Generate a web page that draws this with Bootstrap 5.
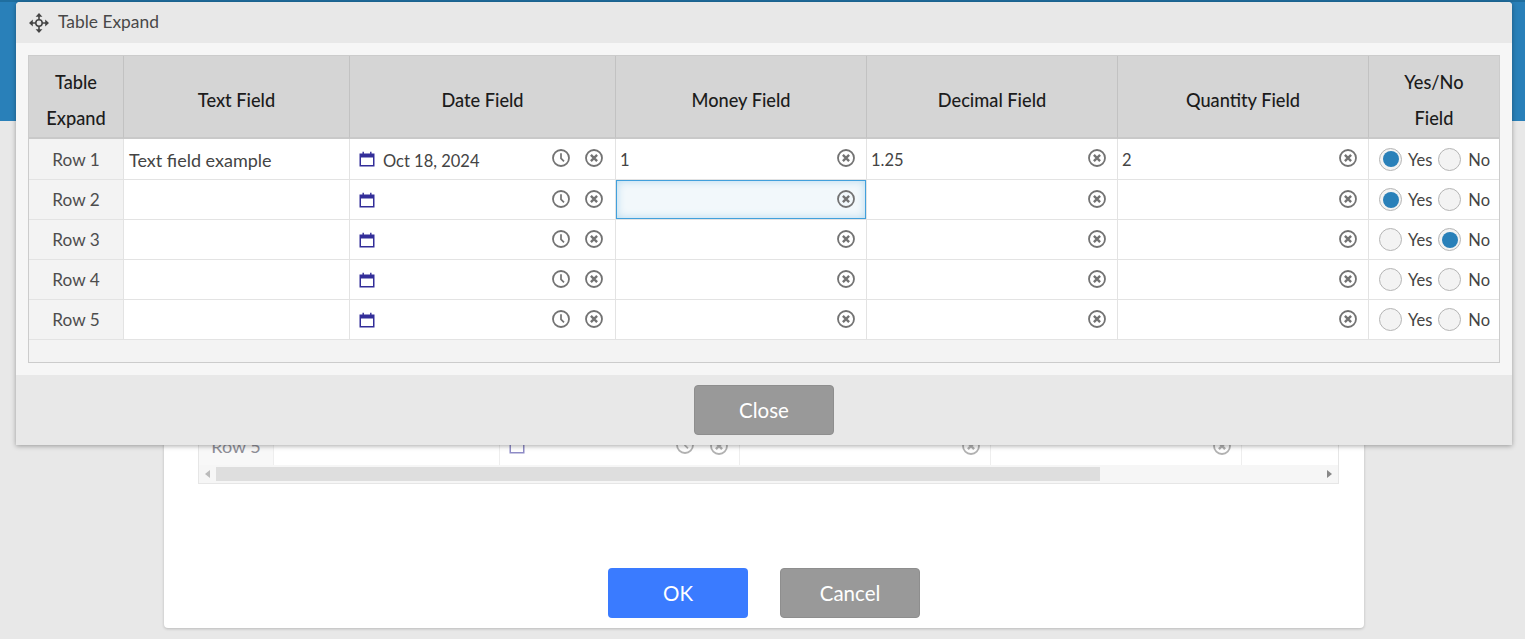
<!DOCTYPE html>
<html lang="en">
<head>
<meta charset="utf-8">
<title>Table Expand</title>
<link href="https://cdn.jsdelivr.net/npm/bootstrap@5.3.0/dist/css/bootstrap.min.css" rel="stylesheet">
<style>
html,body{height:639px;overflow:hidden}
body{background:#e8e8e8;font-family:"Lato","Liberation Sans",sans-serif;font-size:16px;color:#444;position:relative}
.topband{height:121px;background:#2980b9;border-top:2px solid #1f6e9f}
.dlg{width:1200px;height:507px;background:#fff;margin-left:164px;box-shadow:0 1px 3px rgba(0,0,0,.2);border-radius:0 0 4px 4px;padding:0 25px 0 34px}
.backbox{height:363px;width:1141px;border:1px solid #e6e6e6;border-top:0;display:flex;flex-direction:column;justify-content:flex-end}
.backrow{height:44px;display:flex;color:#8d8d96;background:#fff}
.backrow>div{border-right:1px solid #eee;display:flex;align-items:center}
.backlabel{background:#f8f8f8;justify-content:center;padding-top:6px;font-size:18px}
.bc1{width:75px}.bc2{width:226px}.bc3{width:240px;padding:6px 11px 0 9px}.bc4{width:251px;padding:6px 10px 0 0;justify-content:flex-end}.bc5{width:251px;padding:6px 10px 0 0;justify-content:flex-end}
.bc3 .grow{flex:1}
.backrow svg{opacity:.55}
.backrow .clock{margin-right:16px}
.backscroll{height:18px;background:#f6f6f6;position:relative;display:flex;align-items:center;justify-content:space-between;padding:0 6px}
.backthumb{position:absolute;left:17px;top:2px;height:14px;width:884px;background:#dedede}
.arrl{width:0;height:0;border:4px solid transparent;border-right:5px solid #bbb;border-left:0}
.arrr{width:0;height:0;border:4px solid transparent;border-left:5px solid #888;border-right:0}
.backbtns{margin-top:84px;padding-left:410px;gap:32px}
.bbtn{width:140px;height:50px;font-size:20.5px;border-radius:4px;color:#fff;padding:0;line-height:50px}
.bbtn-ok{background:#3a7bff;border:0}
.bbtn-gray{background:#999;border:1px solid #8e8e8e;line-height:48px}
.bbtn-gray:hover{background:#999;color:#fff}
.bbtn-ok:hover{background:#3a7bff;color:#fff}
.overlay{position:absolute;left:16px;top:2px;width:1496px;height:443px;background:#f6f6f6;box-shadow:0 1px 5px rgba(0,0,0,.35);border-radius:4px 4px 0 0;display:flex;flex-direction:column}
.ovhead{height:41px;background:#e8e8e8;padding:0 0 0 13px;gap:9px;font-size:17.4px;color:#484848;border-radius:4px 4px 0 0}
.ovbody{flex:1;padding:12px}
.ovfoot{height:70px;background:#e8e8e8;padding-top:10px}
.gridbox{height:308px;border:1px solid #ccc;background:#f3f3f3;width:1472px}
.gt{table-layout:fixed;border-collapse:separate;border-spacing:0;width:1470px;margin:0}
.gt th{background:#d5d5d5;color:#1c1c1c;font-weight:500;font-size:18.2px;line-height:36px;text-align:center;vertical-align:middle;padding:6px 0 0;height:83px;border-right:1px solid #c2c2c2;border-bottom:2px solid #c9c9c9}
.gt th:last-child{border-right:0}
.gt td{background:#fff;height:40px;padding:0;border-right:1px solid #e3e3e3;border-bottom:1px solid #e3e3e3;font-size:16.5px;color:#444;vertical-align:middle}
.gt tr:first-child td{height:41px}
.gt tr:first-child td.rowlab{padding-top:2px}
.gt td:last-child{border-right:0}
.gt td.rowlab{background:#f3f3f3;text-align:center;color:#4d4d4d;font-size:17.2px}
.cellflex{display:flex;align-items:center;height:39px;padding:0 11px 0 4px}
.textval{padding:2px 0 0 1px;font-size:18px}
.datecell{padding:0 12px 0 9px}
.dateval{margin-left:8px;flex:1;color:#444;padding-top:4px}
.clock{margin:-2px 15px 0 0}
.clr{flex:none;margin-top:-2px}
.numv{flex:1;color:#444;padding-top:2px}
.focuscell{border:1px solid #41a0dc;background:#f2f8fb;box-shadow:inset 0 0 8px #b4d9ee;padding-left:3px;padding-right:10px}
.radioset{display:flex;align-items:center;height:39px;padding-left:10px;color:#444}
.rd{width:23px;height:23px;border-radius:50%;border:1px solid #b5b5b5;background:#f3f3f3;display:inline-flex;align-items:center;justify-content:center;flex:none}
.rd i{display:block;width:16px;height:16px;border-radius:50%;background:#2980b9}
.rlab{margin:0 6px 0 6px;padding-top:2px}
.rlab2{margin-left:7px;padding-top:2px}
.closebtn{width:140px;height:50px;line-height:48px;padding:0;background:#999;border:1px solid #8e8e8e;color:#fff;font-size:20.5px;border-radius:4px}
.closebtn:hover{background:#999;color:#fff}
</style>
</head>
<body>
<svg width="0" height="0" class="d-block position-absolute">
<defs>
<symbol id="ical" viewBox="0 0 16 16"><path fill="#332e99" fill-rule="evenodd" d="M.5 2.5h3V.8h1.4v1.7h6.2V.8h1.4v1.7h3v13H.5zM2 6.5v7.6h12V6.5z"/></symbol>
<symbol id="iclock" viewBox="0 0 18 18"><circle cx="9" cy="9" r="8" fill="none" stroke="#737373" stroke-width="1.8"/><path d="M9 4.2V9.4l3 3" fill="none" stroke="#737373" stroke-width="1.7"/></symbol>
<symbol id="iclr" viewBox="0 0 18 18"><circle cx="9" cy="9" r="8" fill="none" stroke="#737373" stroke-width="1.8"/><path d="M5.9 5.9l6.2 6.2M12.1 5.9l-6.2 6.2" fill="none" stroke="#737373" stroke-width="2.4"/></symbol>
</defs>
</svg>

<div class="topband"></div>
<div class="dlg">
  <div class="backbox">
    <div class="backrow">
      <div class="bc1 backlabel">Row 5</div>
      <div class="bc2"></div>
      <div class="bc3"><svg width="16" height="16"><use href="#ical"/></svg><span class="grow"></span><svg class="clock" width="18" height="18"><use href="#iclock"/></svg><svg width="18" height="18"><use href="#iclr"/></svg></div>
      <div class="bc4"><svg width="18" height="18"><use href="#iclr"/></svg></div>
      <div class="bc5"><svg width="18" height="18"><use href="#iclr"/></svg></div>
    </div>
    <div class="backscroll"><span class="arrl"></span><span class="backthumb"></span><span class="arrr"></span></div>
  </div>
  <div class="d-flex backbtns">
    <button class="btn bbtn bbtn-ok">OK</button>
    <button class="btn bbtn bbtn-gray">Cancel</button>
  </div>
</div>

<div class="overlay">
  <div class="ovhead d-flex align-items-center">
    <svg width="20" height="20" viewBox="0 0 20 20"><g fill="#444"><path d="M10 0l3.4 3.8H6.6zM10 20l-3.4-3.8h6.8zM0 10l3.8-3.4v6.8zM20 10l-3.8 3.4V6.6z"/><path d="M9.2 3h1.6v4H9.2zM9.2 13h1.6v4H9.2zM3 9.2h4v1.6H3zM13 9.2h4v1.6h-4z"/></g><circle cx="10" cy="10" r="3.2" fill="none" stroke="#444" stroke-width="1.5"/></svg>
    <span>Table Expand</span>
  </div>
  <div class="ovbody">
    <div class="gridbox">
      <table class="gt">
        <colgroup><col style="width:95px"><col style="width:226px"><col style="width:266px"><col style="width:251px"><col style="width:251px"><col style="width:251px"><col style="width:130px"></colgroup>
        <thead><tr><th>Table<br>Expand</th><th>Text Field</th><th>Date Field</th><th>Money Field</th><th>Decimal Field</th><th>Quantity Field</th><th>Yes/No<br>Field</th></tr></thead>
        <tbody id="gb"></tbody>
      </table>
    </div>
  </div>
  <div class="ovfoot text-center"><button class="btn closebtn">Close</button></div>
</div>
<script>
var rows=[
{t:"Text field example",d:"Oct 18, 2024",m:"1",c:"1.25",q:"2",r:"y"},
{t:"",d:"",m:"",c:"",q:"",r:"y",f:1},
{t:"",d:"",m:"",c:"",q:"",r:"n"},
{t:"",d:"",m:"",c:"",q:"",r:""},
{t:"",d:"",m:"",c:"",q:"",r:""}];
function clr(){return '<svg class="clr" width="18" height="18"><use href="#iclr"/></svg>';}
function num(v,f){return '<td><div class="cellflex'+(f?' focuscell':'')+'"><span class="numv">'+v+'</span>'+clr()+'</div></td>';}
var h='';
rows.forEach(function(r,i){
h+='<tr><td class="rowlab">Row '+(i+1)+'</td><td><div class="cellflex"><span class="textval">'+r.t+'</span></div></td>'+
'<td><div class="cellflex datecell"><svg width="16" height="16"><use href="#ical"/></svg><span class="dateval">'+r.d+'</span><svg class="clock" width="18" height="18"><use href="#iclock"/></svg>'+clr()+'</div></td>'+
num(r.m,r.f)+num(r.c)+num(r.q)+
'<td><div class="radioset"><span class="rd">'+(r.r=="y"?'<i></i>':'')+'</span><span class="rlab">Yes</span><span class="rd">'+(r.r=="n"?'<i></i>':'')+'</span><span class="rlab2">No</span></div></td></tr>';
});
document.getElementById('gb').innerHTML=h;
</script>
<script src="https://cdn.jsdelivr.net/npm/bootstrap@5.3.0/dist/js/bootstrap.bundle.min.js"></script>
</body>
</html>
